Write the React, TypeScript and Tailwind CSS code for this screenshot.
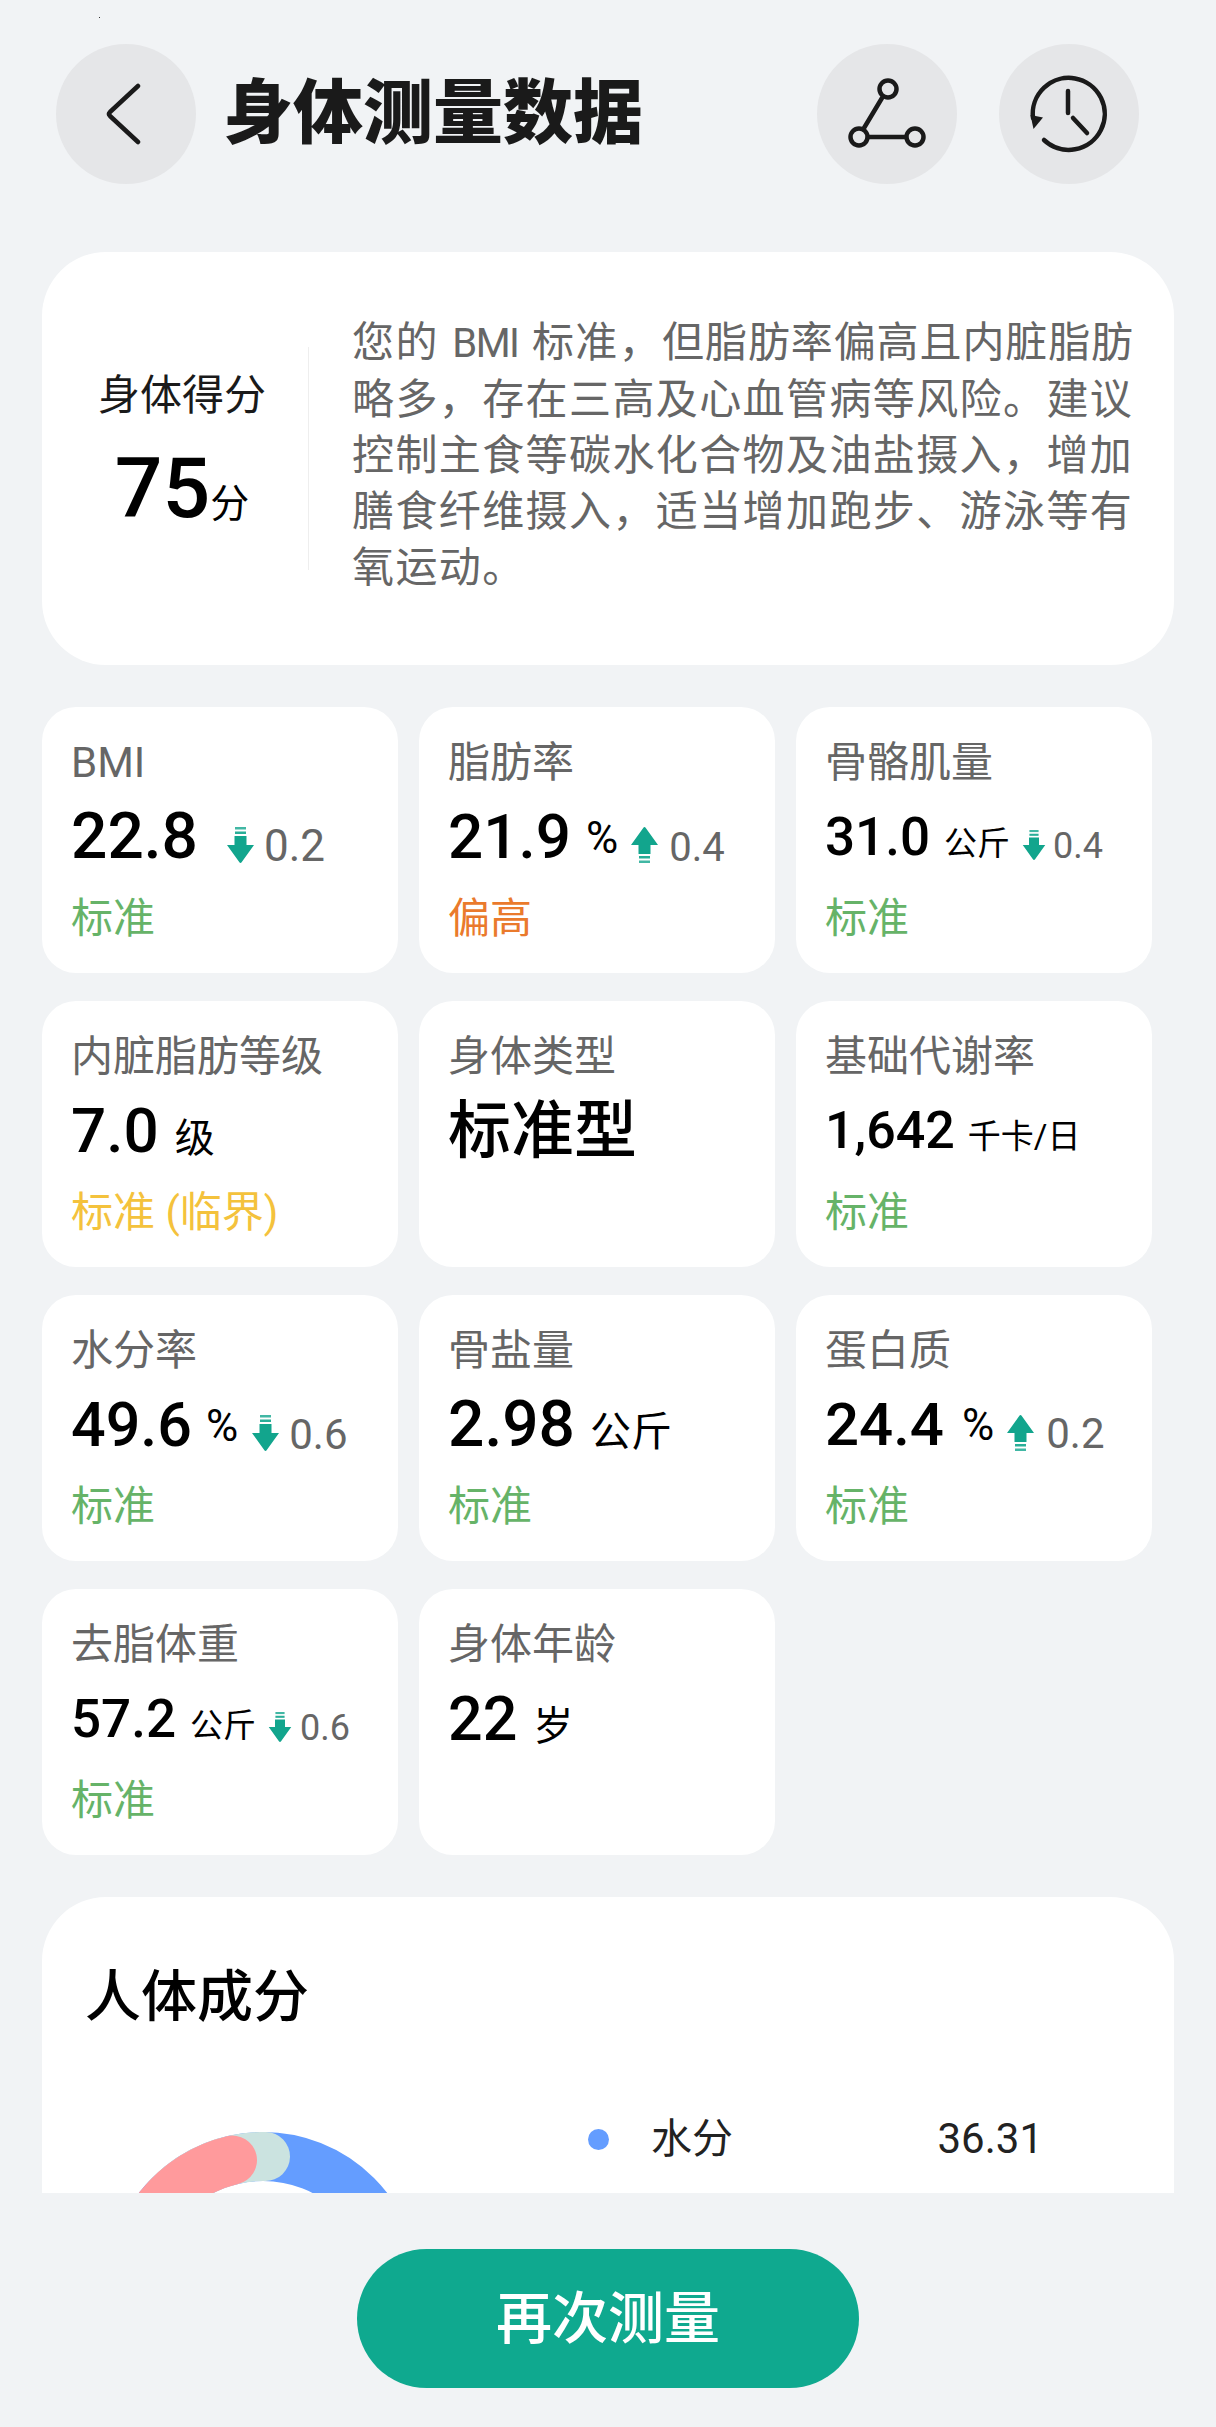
import React from "react";

const sans = "[font-family:Roboto,'Noto_Sans_CJK_SC',sans-serif]";

function Arrow({ up, className }: { up?: boolean; className: string }) {
  return (
    <svg viewBox="0 0 27 36" className={className} fill="#12a58d">
      <g transform={up ? "rotate(180 13.500 18)" : undefined}>
        <rect x="8" y="0" width="11" height="2.500" opacity="0.8" />
        <rect x="8" y="4.500" width="11" height="2.500" opacity="0.9" />
        <path d="M7.500 9h12v9H27L14.800 35a1.600 1.600 0 0 1-2.600 0L0 18h7.500z" />
      </g>
    </svg>
  );
}

type Item = {
  label: string;
  value: string;
  vClass: string;
  unit?: string;
  uClass?: string;
  delta?: string;
  up?: boolean;
  dClass?: string;
  aClass?: string;
  status?: string;
  sClass?: string;
};

const green = "text-[#66b368]";
const items: Item[] = [
  { label: "BMI", value: "22.8", vClass: "text-[64px]", delta: "0.2", dClass: "text-[44px] ml-[10px]", aClass: "w-[27px] h-[36px] ml-[29px]", status: "标准", sClass: green },
  { label: "脂肪率", value: "21.9", vClass: "text-[62px]", unit: "%", uClass: "text-[44px] ml-[15px] -translate-y-[5px]", delta: "0.4", up: true, dClass: "text-[40px] ml-[11px]", aClass: "w-[27px] h-[36px] ml-[13px]", status: "偏高", sClass: "text-[#ea7a2c]" },
  { label: "骨骼肌量", value: "31.0", vClass: "text-[53px]", unit: "公斤", uClass: "text-[33px] ml-[14px]", delta: "0.4", dClass: "text-[36px] ml-[7px]", aClass: "w-[24px] h-[30px] ml-[12px]", status: "标准", sClass: green },
  { label: "内脏脂肪等级", value: "7.0", vClass: "text-[62px]", unit: "级", uClass: "text-[40px] ml-[16px]", status: "标准 (临界)", sClass: "text-[#f4c23c]" },
  { label: "身体类型", value: "标准型", vClass: "text-[63px] font-bold" },
  { label: "基础代谢率", value: "1,642", vClass: "text-[52px]", unit: "千卡/日", uClass: "text-[33px] ml-[13px]", status: "标准", sClass: green },
  { label: "水分率", value: "49.6", vClass: "text-[61px]", unit: "%", uClass: "text-[44px] ml-[14px] -translate-y-[5px]", delta: "0.6", dClass: "text-[42px] ml-[10px]", aClass: "w-[27px] h-[36px] ml-[14px]", status: "标准", sClass: green },
  { label: "骨盐量", value: "2.98", vClass: "text-[64px]", unit: "公斤", uClass: "text-[41px] ml-[15px]", status: "标准", sClass: green },
  { label: "蛋白质", value: "24.4", vClass: "text-[60px]", unit: "%", uClass: "text-[44px] ml-[18px] -translate-y-[5px]", delta: "0.2", up: true, dClass: "text-[42px] ml-[12px]", aClass: "w-[27px] h-[36px] ml-[13px]", status: "标准", sClass: green },
  { label: "去脂体重", value: "57.2", vClass: "text-[53px]", unit: "公斤", uClass: "text-[33px] ml-[14px]", delta: "0.6", dClass: "text-[36px] ml-[8px]", aClass: "w-[24px] h-[30px] ml-[12px]", status: "标准", sClass: green },
  { label: "身体年龄", value: "22", vClass: "text-[61px]", unit: "岁", uClass: "text-[40px] ml-[16px]" },
];

function Card({ it }: { it: Item }) {
  return (
    <div className="h-[266px] rounded-[34px] bg-white pl-[29px] pt-[28px]">
      <div className="h-[56px] text-[42px] leading-[56px] text-[#666666] whitespace-nowrap">{it.label}</div>
      <div className="mt-[8px] flex h-[76px] items-baseline whitespace-nowrap leading-[76px] text-black">
        <span className={`${it.vClass} font-medium`}>{it.value}</span>
        {it.unit && <span className={it.uClass}>{it.unit}</span>}
        {it.delta && <Arrow up={it.up} className={`${it.aClass} self-center translate-y-[8px]`} />}
        {it.delta && <span className={`${it.dClass} translate-y-[3px] text-[#666666]`}>{it.delta}</span>}
      </div>
      {it.status && <div className={`mt-[16px] h-[56px] text-[42px] leading-[56px] whitespace-nowrap ${it.sClass}`}>{it.status}</div>}
    </div>
  );
}

export default function App() {
  return (
    <div className={`relative flex h-[2427px] w-[1216px] flex-col overflow-hidden bg-[#f1f3f5] ${sans}`}>
      <div className="absolute left-[99px] top-[17px] h-px w-px bg-[#333333]" />
      <header className="flex h-[252px] items-start pl-[56px] pr-[77px] pt-[44px]">
        <div className="flex h-[140px] w-[140px] items-center justify-center rounded-full bg-[#e5e6e8]">
          <svg viewBox="0 0 36 62" className="mr-[7px] h-[62px] w-[36px]" fill="none" stroke="#1a1a1a" strokeWidth="4.500" strokeLinecap="round" strokeLinejoin="round">
            <path d="M33 3 5 29q-2 2 0 4l28 26" />
          </svg>
        </div>
        <h1 className="ml-[27px] flex h-[140px] flex-1 items-center text-[70px] font-black text-[#1a1a1a] whitespace-nowrap">身体测量数据</h1>
        <div className="flex h-[140px] w-[140px] items-center justify-center rounded-full bg-[#e5e6e8]">
          <svg viewBox="0 0 80 80" className="h-[80px] w-[80px]" fill="none" stroke="#1a1a1a" strokeWidth="4.500" strokeLinecap="round">
            <circle cx="41" cy="15" r="8.500" />
            <circle cx="12" cy="63" r="8.500" />
            <circle cx="68" cy="63" r="8.500" />
            <path d="M35 24 17 54M21 63h38" />
          </svg>
        </div>
        <div className="ml-[42px] flex h-[140px] w-[140px] items-center justify-center rounded-full bg-[#e5e6e8]">
          <svg viewBox="0 0 80 80" className="h-[80px] w-[80px]" fill="none" stroke="#1a1a1a" strokeWidth="4.500" strokeLinecap="round">
            <path d="M15 66A36 36 0 1 0 4 44" />
            <path d="M39 17v22M44 44l14 15" />
            <path d="M1.500 41 14 43.500 4.500 55z" fill="#1a1a1a" stroke="none" />
          </svg>
        </div>
      </header>

      <main className="flex-1 overflow-hidden px-[42px]">
        <section className="flex h-[413px] items-center rounded-[64px] bg-white">
          <div className="flex w-[266px] shrink-0 flex-col items-center pl-[14px]">
            <div className="text-[42px] leading-[56px] text-[#1a1a1a] whitespace-nowrap">身体得分</div>
            <div className="mt-[20px] flex items-baseline leading-[90px] text-black">
              <span className="text-[84px] font-medium">75</span>
              <span className="text-[39px]">分</span>
            </div>
          </div>
          <div className="h-[223px] w-px shrink-0 bg-[#eeeeee]" />
          <p className="mb-[6px] ml-[43px] whitespace-nowrap text-[42px] leading-[56px] tracking-[1.4px] text-[#666666]">
            您的<span className="text-[40px] tracking-[-1.5px] [word-spacing:5px]"> BMI </span>标准，<span className="tracking-[0.9px]">但脂肪率偏高且内脏脂肪</span>
            <br />
            略多，存在三高及心血管病等风险。建议
            <br />
            控制主食等碳水化合物及油盐摄入，增加
            <br />
            膳食纤维摄入，适当增加跑步、游泳等有
            <br />
            氧运动。
          </p>
        </section>

        <section className="mt-[42px] grid grid-cols-[repeat(3,356px)] gap-x-[21px] gap-y-[28px]">
          {items.map((it) => (
            <Card key={it.label} it={it} />
          ))}
        </section>

        <section className="mt-[42px] h-[600px] rounded-[64px] bg-white px-[43px] pt-[67px]">
          <h2 className="text-[56px] font-medium leading-[66px] text-black whitespace-nowrap">人体成分</h2>
          <div className="mt-[89px] flex items-start">
            <svg viewBox="0 0 314 314" className="ml-[21px] mt-[13px] h-[314px] w-[314px] shrink-0" fill="none" strokeWidth="49">
              <circle cx="157" cy="157" r="132.500" stroke="#649dff" />
              <path d="M63.300 63.300A132.500 132.500 0 0 1 159.500 24.500" stroke="#cbe3e0" strokeLinecap="round" />
              <path d="M24.500 157A132.500 132.500 0 0 1 126.500 28.100" stroke="#ff9a9c" strokeLinecap="round" />
            </svg>
            <div className="ml-[168px] flex h-[40px] w-[455px] items-center">
              <span className="h-[21px] w-[21px] rounded-full bg-[#649dff]" />
              <span className="ml-[42px] text-[41px] leading-[40px] text-[#222222]">水分</span>
              <span className="ml-auto text-[42px] leading-[40px] text-[#222222]">36.31</span>
            </div>
          </div>
        </section>
      </main>

      <footer className="flex h-[234px] shrink-0 justify-center pt-[56px]">
        <button className="h-[139px] w-[502px] rounded-full bg-[#0fa98f] text-[56px] font-medium text-white">再次测量</button>
      </footer>
    </div>
  );
}
